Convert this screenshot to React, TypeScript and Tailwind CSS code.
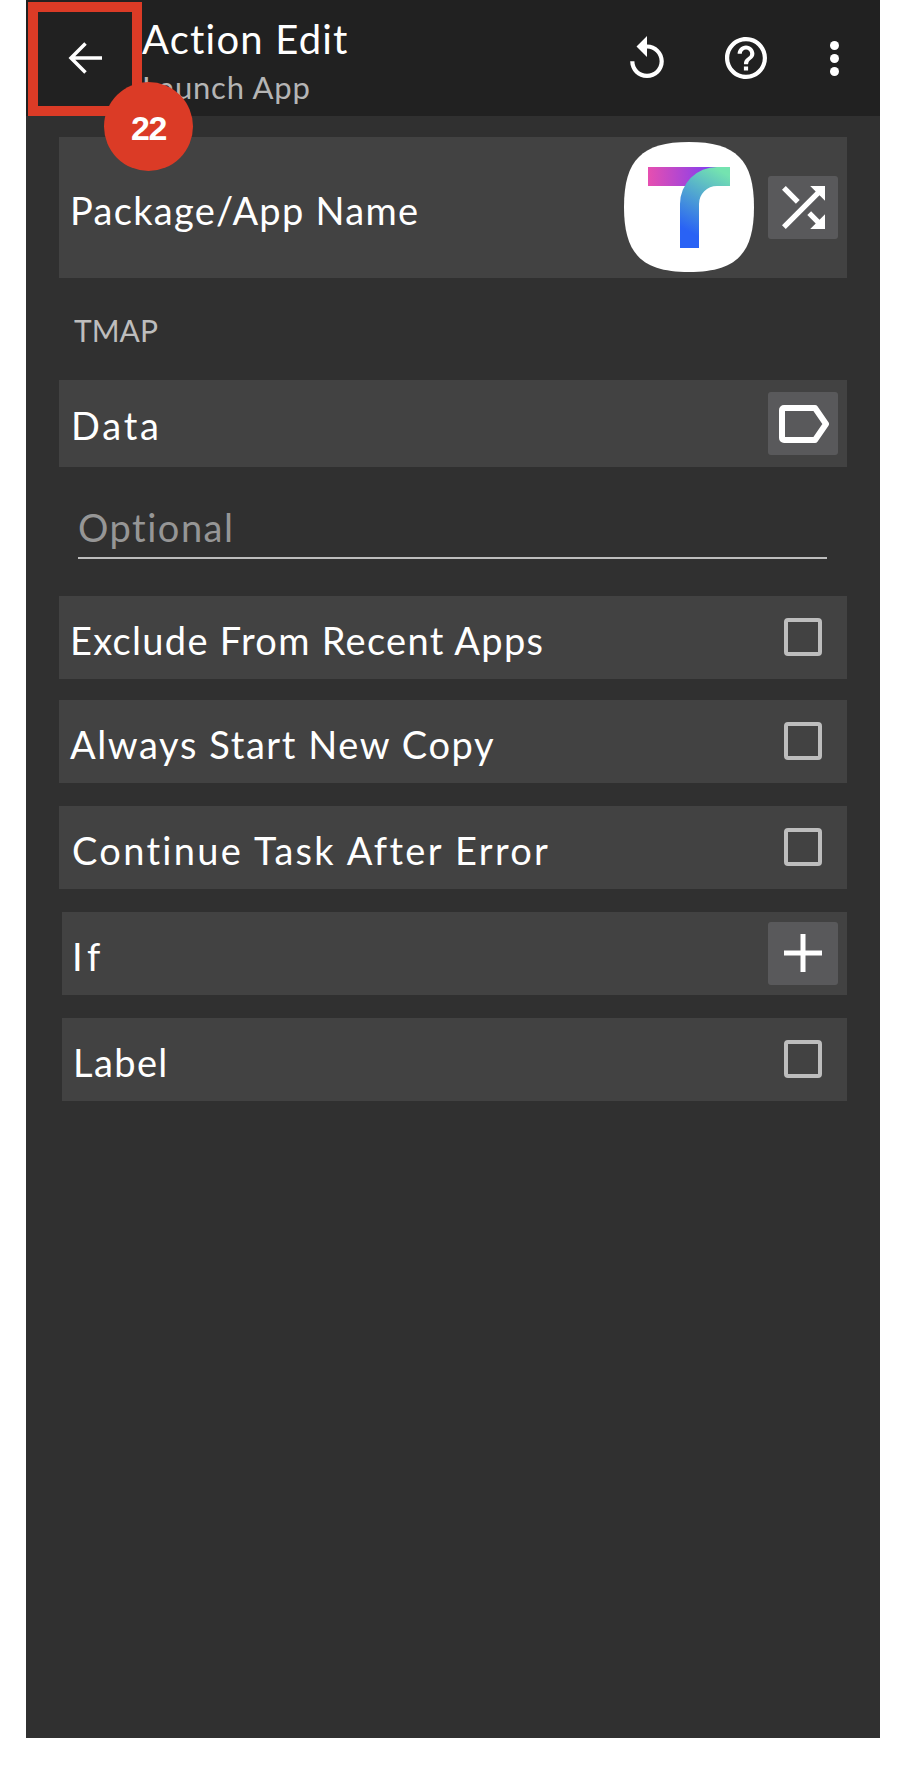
const font = "font-['Lato',_'Noto_Sans',_sans-serif]";

function Check() {
  return <div className="mb-[2px] mr-[25px] h-[38px] w-[38px] rounded-[4px] border-[4px] border-[#bdbdbd]" />;
}

function IconButton({ children }: { children: React.ReactNode }) {
  return (
    <div className="mr-[9px] flex h-[63px] w-[70px] items-center justify-center rounded-[3px] bg-[#59595b]">
      {children}
    </div>
  );
}

function Row({
  label,
  className,
  textClass,
  children,
}: {
  label: string;
  className: string;
  textClass: string;
  children: React.ReactNode;
}) {
  return (
    <div className={`flex items-center justify-between bg-[#424242] ${className}`}>
      <span className={`text-[38px] font-normal leading-[44px] text-white ${textClass}`}>{label}</span>
      {children}
    </div>
  );
}

function Logo() {
  return (
    <svg viewBox="0 0 130 130" className="mb-[1px] mr-[14px] h-[130px] w-[130px]">
      <defs>
        <linearGradient id="bar" x1="24" y1="0" x2="92" y2="0" gradientUnits="userSpaceOnUse">
          <stop offset="0" stopColor="#e64fb0" />
          <stop offset="1" stopColor="#7a3df5" />
        </linearGradient>
        <linearGradient id="stem" x1="95" y1="28" x2="62" y2="88" gradientUnits="userSpaceOnUse">
          <stop offset="0" stopColor="#74e3b0" />
          <stop offset="1" stopColor="#2962f5" />
        </linearGradient>
      </defs>
      <path d="M65 0C112 0 130 18 130 65C130 112 112 130 65 130C18 130 0 112 0 65C0 18 18 0 65 0Z" fill="#fff" />
      <rect x="24" y="25" width="70" height="19" fill="url(#bar)" />
      <path d="M56 106V62A37 37 0 0 1 93 25H106V44H93A18 18 0 0 0 75 62V106Z" fill="url(#stem)" />
    </svg>
  );
}

export default function App() {
  return (
    <div className={`min-h-[1790px] bg-white pl-[26px] ${font}`}>
      <div className="relative flex h-[1738px] w-[854px] flex-col bg-[#303030]">
        <header className="flex h-[116px] items-center bg-[#212121] pl-[42px] pr-[41px]">
          <svg viewBox="0 0 34 34" className="h-[34px] w-[34px]" fill="none" stroke="#fff" strokeWidth="3.5">
            <path d="M34 17H3M17.5 2.5L3 17L17.5 31.5" />
          </svg>
          <div className="ml-[40px] flex flex-1 flex-col pt-[8px]">
            <span className="text-[40px] font-normal leading-[50px] tracking-[1.2px] text-white">Action Edit</span>
            <span className="text-[31px] font-normal leading-[46px] tracking-[0.8px] text-[#b5b5b5]">Launch App</span>
          </div>
          <svg viewBox="4 1 16 20" className="mb-[2px] h-[42px] w-[34px]" fill="#fff">
            <path d="M12 5V1L7 6l5 5V7c3.31 0 6 2.69 6 6s-2.69 6-6 6-6-2.69-6-6H4c0 4.42 3.58 8 8 8s8-3.58 8-8-3.58-8-8-8z" />
          </svg>
          <svg viewBox="2 2 20 20" className="ml-[61px] h-[42px] w-[42px]" fill="#fff">
            <path d="M11 18h2v-2h-2v2zm1-16C6.48 2 2 6.48 2 12s4.48 10 10 10 10-4.48 10-10S17.52 2 12 2zm0 18c-4.41 0-8-3.59-8-8s3.59-8 8-8 8 3.59 8 8-3.59 8-8 8zm0-14c-2.21 0-4 1.79-4 4h2c0-1.1.9-2 2-2s2 .9 2 2c0 2-3 1.75-3 5h2c0-2.25 3-2.5 3-5 0-2.21-1.79-4-4-4z" />
          </svg>
          <div className="ml-[63px] flex flex-col gap-[4px]">
            <div className="h-[9px] w-[9px] rounded-full bg-white" />
            <div className="h-[9px] w-[9px] rounded-full bg-white" />
            <div className="h-[9px] w-[9px] rounded-full bg-white" />
          </div>
        </header>

        <main className="ml-[33px] mr-[33px] flex flex-col">
          <Row label="Package/App Name" className="mt-[21px] h-[141px]" textClass="ml-[11px] mt-[4px] tracking-[1.3px]">
            <div className="flex items-center">
              <Logo />
              <IconButton>
                <svg viewBox="4 4 16 16" className="h-[43px] w-[43px]" fill="#fff">
                  <path d="M10.59 9.17L5.41 4 4 5.41l5.17 5.17 1.42-1.41zM14.5 4l2.04 2.04L4 18.59 5.41 20 17.96 7.46 20 9.5V4h-5.5zm.33 9.41l-1.41 1.41 3.13 3.13L14.5 20H20v-5.5l-2.04 2.04-3.13-3.13z" />
                </svg>
              </IconButton>
            </div>
          </Row>

          <div className="flex h-[102px] items-center pl-[15px] pt-[2px]">
            <span className="text-[30px] font-normal leading-[36px] text-[#bdbdbd]">TMAP</span>
          </div>

          <Row label="Data" className="h-[87px]" textClass="ml-[12px] mt-[3px] tracking-[2.8px]">
            <IconButton>
              <svg viewBox="0 0 50 38" className="ml-[2px] h-[38px] w-[50px]" fill="none" stroke="#fff" strokeWidth="6" strokeLinejoin="round">
                <path d="M3 5a2 2 0 0 1 2-2h31l11 16-11 16H5a2 2 0 0 1-2-2Z" />
              </svg>
            </IconButton>
          </Row>

          <div className="ml-[19px] mr-[20px] flex h-[92px] items-end border-b-[2px] border-[#bdbdbd] pb-[8px]">
            <span className="text-[38px] font-normal leading-[44px] tracking-[1.5px] text-[#969696]">Optional</span>
          </div>

          <Row label="Exclude From Recent Apps" className="mt-[37px] h-[83px]" textClass="ml-[11px] mt-[4px] tracking-[1.3px]">
            <Check />
          </Row>
          <Row label="Always Start New Copy" className="mt-[21px] h-[83px]" textClass="ml-[11px] mt-[4px] tracking-[1.6px]">
            <Check />
          </Row>
          <Row label="Continue Task After Error" className="mt-[23px] h-[83px]" textClass="ml-[13px] mt-[4px] tracking-[2.3px]">
            <Check />
          </Row>
          <Row label="If" className="ml-[3px] mt-[23px] h-[83px]" textClass="ml-[10px] mt-[4px] tracking-[5px]">
            <div className="mr-[9px] mt-[-1px] flex h-[63px] w-[70px] items-center justify-center rounded-[3px] bg-[#59595b]">
              <svg viewBox="0 0 38 38" className="h-[38px] w-[38px]" fill="#fff">
                <path d="M16.5 0h5v16.5H38v5H21.500V38h-5V21.500H0v-5h16.5Z" />
              </svg>
            </div>
          </Row>
          <Row label="Label" className="ml-[3px] mt-[23px] h-[83px]" textClass="ml-[11px] mt-[4px] tracking-[1.4px]">
            <Check />
          </Row>
        </main>

        <div className="absolute left-[2px] top-[2px] h-[114px] w-[114px] border-[10px] border-[#db3b26]" />
        <div className="absolute left-[78px] top-[82px] flex h-[89px] w-[89px] items-center justify-center rounded-full bg-[#db3b26] pt-[4px] font-['Liberation_Sans',_sans-serif] text-[34px] font-bold tracking-[-1.5px] text-white">
          22
        </div>
      </div>
    </div>
  );
}
